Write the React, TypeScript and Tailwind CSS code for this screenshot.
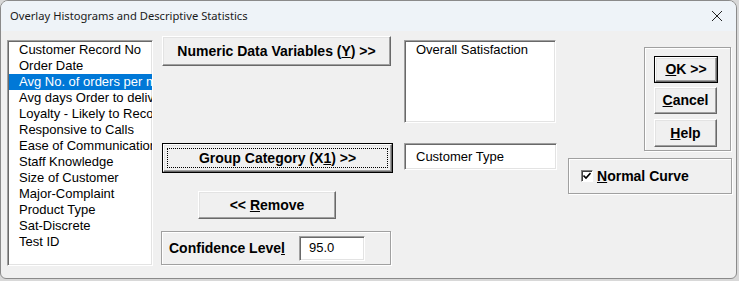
import React from "react";

const items = [
  "Customer Record No",
  "Order Date",
  "Avg No. of orders per month",
  "Avg days Order to delivery",
  "Loyalty - Likely to Recommend",
  "Responsive to Calls",
  "Ease of Communication",
  "Staff Knowledge",
  "Size of Customer",
  "Major-Complaint",
  "Product Type",
  "Sat-Discrete",
  "Test ID",
];

const raised =
  "border border-t-white border-l-white border-r-[#696969] border-b-[#696969] bg-[#f0f0f0] shadow-[inset_-1px_-1px_0_#a0a0a0,inset_1px_1px_0_#e3e3e3]";
const sunken =
  "border border-t-[#a0a0a0] border-l-[#a0a0a0] border-r-white border-b-white bg-white shadow-[inset_1px_1px_0_#696969,inset_-1px_-1px_0_#e3e3e3]";
const groupBox = "border border-[#a0a0a0] shadow-[inset_1px_1px_0_#fff,1px_1px_0_#fff]";

function Btn({ children, className = "", def = false, focus = false }: { children: React.ReactNode; className?: string; def?: boolean; focus?: boolean }) {
  const inner = (
    <div className={`${raised} flex h-full w-full items-center justify-center text-[14px] font-bold text-black`}>
      {focus ? (
        <div className="flex h-[calc(100%-6px)] w-[calc(100%-6px)] items-center justify-center border border-dotted border-black">
          {children}
        </div>
      ) : (
        children
      )}
    </div>
  );
  if (def) return <div className={`border border-black ${className}`}>{inner}</div>;
  return <div className={className}>{inner}</div>;
}

export default function App() {
  return (
    <div className="h-[281px] w-[739px] bg-[#d8d8d8]" style={{ fontFamily: '"Liberation Sans", Arial, sans-serif' }}>
      <div className="h-[279px] w-[737px] overflow-hidden rounded-t-lg rounded-b-md border border-[#8a8a8a] bg-[#f0f0f0]">
        <div className="flex h-[30px] items-center justify-between bg-[#eef3f8] pl-[9px] pr-[12px]">
          <span className="text-[11.2px] text-[#1a1a1a]" style={{ fontFamily: '"Noto Sans", "Open Sans", sans-serif' }}>
            Overlay Histograms and Descriptive Statistics
          </span>
          <svg width="12" height="12" viewBox="0 0 12 12" className="mr-[1px]">
            <path d="M1 1 L11 11 M11 1 L1 11" stroke="#222" strokeWidth="1" />
          </svg>
        </div>
        <div className="flex text-[13px] text-black">
          {/* variable list */}
          <div className={`${sunken} ml-[6px] mt-[9px] h-[226px] w-[146px] overflow-hidden pt-[1px]`}>
            {items.map((it, i) => (
              <div
                key={it}
                className={`ml-[1px] flex h-[16px] items-center whitespace-nowrap pl-[10px] ${i === 2 ? "bg-[#0078d7] text-white" : ""}`}
              >
                {it}
              </div>
            ))}
          </div>

          {/* buttons column */}
          <div className="ml-[8px] flex w-[231px] flex-col">
            <Btn className="ml-px mt-[5px] h-[30px] w-[229px]">
              <span>
                Numeric Data Variables (<u>Y</u>) &gt;&gt;
              </span>
            </Btn>
            <Btn def focus className="ml-px mt-[77px] h-[30px] w-[231px]">
              <span>
                Group Category (X<u>1</u>) &gt;&gt;
              </span>
            </Btn>
            <Btn className="ml-[37px] mt-[18px] h-[28px] w-[138px]">
              <span>
                &lt;&lt; <u>R</u>emove
              </span>
            </Btn>
            <div className={`${groupBox} mt-[12px] flex h-[34px] w-[230px] items-center pl-[7px]`}>
              <span className="text-[14px] font-bold">
                Confidence Leve<u>l</u>
              </span>
              <div className={`${sunken} ml-[14px] flex h-[25px] w-[66px] items-center pl-[9px]`}>95.0</div>
            </div>
          </div>

          {/* selected boxes */}
          <div className="ml-[12px] flex w-[152px] flex-col">
            <div className={`${sunken} mt-[9px] h-[83px] w-[152px] pl-[11px] pt-[1px]`}>
              <div className="flex h-[16px] items-center">Overall Satisfaction</div>
            </div>
            <div className={`${sunken} mt-[20px] flex h-[27px] w-[153px] items-center pl-[11px]`}>Customer Type</div>
          </div>

          {/* right side */}
          <div className="ml-[12px] flex flex-col">
            <div className={`${groupBox} ml-[76px] mt-[16px] flex h-[104px] w-[87px] flex-col pl-[9px] pt-[8px]`}>
              <Btn def className="h-[27px] w-[64px]">
                <span>
                  <u>O</u>K &gt;&gt;
                </span>
              </Btn>
              <Btn className="mt-[4px] h-[27px] w-[63px]">
                <span>
                  <u>C</u>ancel
                </span>
              </Btn>
              <Btn className="mt-[5px] h-[28px] w-[63px]">
                <span>
                  <u>H</u>elp
                </span>
              </Btn>
            </div>
            <div className={`${groupBox} mt-[7px] flex h-[36px] w-[164px] items-center pl-[12px]`}>
              <div className="flex h-[12px] w-[12px] items-center justify-center border border-t-[#808080] border-l-[#808080] border-r-white border-b-white bg-white shadow-[inset_1px_1px_0_#404040]">
                <svg width="8" height="8" viewBox="0 0 8 8">
                  <path d="M0.5 3.5 L3 6 L7.5 1" stroke="#000" strokeWidth="1.6" fill="none" />
                </svg>
              </div>
              <span className="ml-[4px] text-[14px] font-bold">
                <u>N</u>ormal Curve
              </span>
            </div>
          </div>
        </div>
      </div>
    </div>
  );
}
